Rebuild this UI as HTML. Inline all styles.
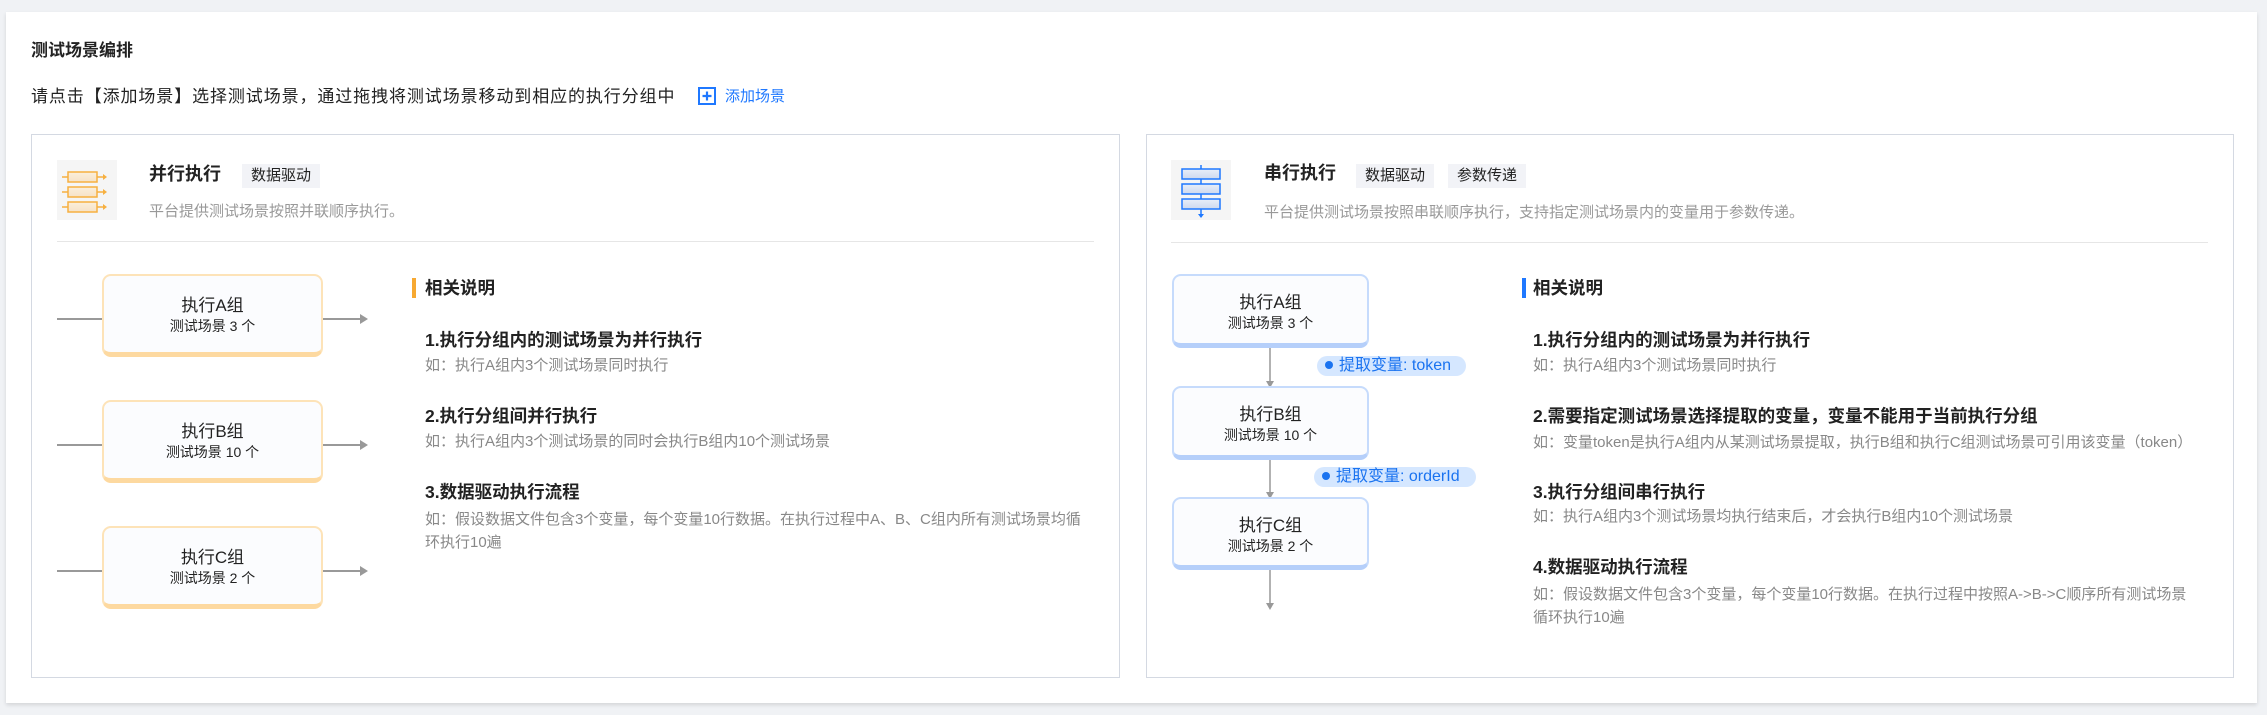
<!DOCTYPE html>
<html><head><meta charset="utf-8">
<style>
*{margin:0;padding:0;box-sizing:border-box}
body{width:2267px;height:715px;background:#f0f2f5;font-family:"Liberation Sans","Noto Sans CJK SC",sans-serif;position:relative;overflow:hidden;color:#222}
.a{position:absolute;white-space:nowrap}
.card{position:absolute;left:6px;top:12px;width:2251px;height:691px;background:#fff;box-shadow:0 2px 4px rgba(0,0,0,.12)}
.panel{position:absolute;top:134px;height:544px;border:1px solid #d4d9e2;background:#fff}
.ib{position:absolute;width:60px;height:60px;background:#f5f5f5}
.tag{position:absolute;height:24px;line-height:24px;background:#f2f3f7;font-size:15px;color:#222;padding:0 9px}
.box{position:absolute;background:#fbfcfe;border-radius:9px;text-align:center}
.box .n{font-size:17px;color:#222;margin-top:0}
.box .s{font-size:14px;color:#222}
.ob{border:2px solid #fde3b8;border-bottom:5px solid #fdd9a0}
.bb{border:2px solid #c6dbfc;border-bottom:5px solid #b5cffa}
.h{font-size:17.5px;font-weight:bold;color:#222}
.d{font-size:15px;color:#888}
.hl{position:absolute;width:4px;height:20px}
.pill{position:absolute;height:20px;line-height:20px;border-radius:10px;background:#d5e7ff;color:#1a73f0;font-size:16px;padding:0 0 0 8px}
.pill i{display:inline-block;width:8px;height:8px;border-radius:4px;background:#1a73f0;margin-right:6px;vertical-align:1px}
</style></head><body>
<div class="card"></div>
<div class="a" style="left:31px;top:40px;font-size:17px;font-weight:bold;line-height:22px">测试场景编排</div>
<div class="a" style="left:31px;top:86px;font-size:17px;letter-spacing:0.9px;line-height:22px;color:#222">请点击【添加场景】选择测试场景，通过拖拽将测试场景移动到相应的执行分组中</div>
<svg class="a" style="left:698px;top:87px" width="18" height="18" viewBox="0 0 18 18"><rect x="1" y="1" width="16" height="16" fill="none" stroke="#1f78ff" stroke-width="2"/><path d="M9 4.5v9M4.5 9h9" stroke="#1f78ff" stroke-width="2.2"/></svg>
<div class="a" style="left:725px;top:86px;font-size:15px;line-height:22px;color:#1f78ff">添加场景</div>

<!-- left panel -->
<div class="panel" style="left:31px;width:1089px"></div>
<div class="ib" style="left:57px;top:160px"></div>
<svg class="a" style="left:57px;top:160px" width="60" height="60" viewBox="0 0 60 60">
<defs><linearGradient id="og" x1="0" y1="0" x2="0" y2="1"><stop offset="0" stop-color="#fbefdc"/><stop offset="1" stop-color="#f6e2c6"/></linearGradient></defs>
<g stroke="#f7b040" stroke-width="1.5" fill="url(#og)">
<rect x="11" y="12" width="29" height="10"/><rect x="11" y="27" width="29" height="10"/><rect x="11" y="42" width="29" height="10"/></g>
<g stroke="#f7b040" stroke-width="1.5"><path d="M5 17h6M40 17h7M5 32h6M40 32h7M5 47h6M40 47h7"/></g>
<g fill="#f7b040"><path d="M46 14l4 3-4 3z"/><path d="M46 29l4 3-4 3z"/><path d="M46 44l4 3-4 3z"/></g></svg>
<div class="a h" style="left:149px;top:163px;font-size:18px;line-height:22px">并行执行</div>
<div class="tag" style="left:242px;top:164px">数据驱动</div>
<div class="a" style="left:149px;top:202px;font-size:15px;line-height:20px;color:#999">平台提供测试场景按照并联顺序执行。</div>
<div class="a" style="left:57px;top:241px;width:1037px;height:1px;background:#e6e6e6"></div>

<svg class="a" style="left:50px;top:260px" width="330" height="360">
<g stroke="#999" stroke-width="2"><path d="M7 59h46M273 59h40M7 185h46M273 185h40M7 311h46M273 311h40"/></g>
<g fill="#999"><path d="M310 54l8 5-8 5z"/><path d="M310 180l8 5-8 5z"/><path d="M310 306l8 5-8 5z"/></g></svg>
<div class="box ob" style="left:102px;top:274px;width:221px;height:83px"><div class="n" style="margin-top:15px">执行A组</div><div class="s">测试场景 3 个</div></div>
<div class="box ob" style="left:102px;top:400px;width:221px;height:83px"><div class="n" style="margin-top:15px">执行B组</div><div class="s">测试场景 10 个</div></div>
<div class="box ob" style="left:102px;top:526px;width:221px;height:83px"><div class="n" style="margin-top:15px">执行C组</div><div class="s">测试场景 2 个</div></div>

<div class="hl" style="left:412px;top:278px;background:#f7a932"></div>
<div class="a h" style="left:425px;top:277px;line-height:22px">相关说明</div>
<div class="a h" style="left:425px;top:329px;line-height:22px">1.执行分组内的测试场景为并行执行</div>
<div class="a d" style="left:425px;top:356px;line-height:20px">如：执行A组内3个测试场景同时执行</div>
<div class="a h" style="left:425px;top:405px;line-height:22px">2.执行分组间并行执行</div>
<div class="a d" style="left:425px;top:432px;line-height:20px">如：执行A组内3个测试场景的同时会执行B组内10个测试场景</div>
<div class="a h" style="left:425px;top:481px;line-height:22px">3.数据驱动执行流程</div>
<div class="a d" style="left:425px;top:508px;line-height:23px">如：假设数据文件包含3个变量，每个变量10行数据。在执行过程中A、B、C组内所有测试场景均循<br>环执行10遍</div>

<!-- right panel -->
<div class="panel" style="left:1146px;width:1088px"></div>
<div class="ib" style="left:1171px;top:160px"></div>
<svg class="a" style="left:1171px;top:160px" width="60" height="60" viewBox="0 0 60 60">
<defs><linearGradient id="bg2" x1="0" y1="0" x2="0" y2="1"><stop offset="0" stop-color="#e8eef9"/><stop offset="1" stop-color="#cdd9ee"/></linearGradient></defs>
<path d="M30 5v52" stroke="#1f78ff" stroke-width="1.5"/>
<g stroke="#1f78ff" stroke-width="1.5" fill="url(#bg2)"><rect x="11" y="9" width="38" height="10"/><rect x="11" y="24" width="38" height="10"/><rect x="11" y="39" width="38" height="10"/></g>
<path d="M27 54l3 4 3-4z" fill="#1f78ff"/></svg>
<div class="a h" style="left:1264px;top:162px;font-size:18px;line-height:22px">串行执行</div>
<div class="tag" style="left:1356px;top:164px">数据驱动</div>
<div class="tag" style="left:1448px;top:164px">参数传递</div>
<div class="a" style="left:1264px;top:203px;font-size:15px;line-height:20px;color:#999">平台提供测试场景按照串联顺序执行，支持指定测试场景内的变量用于参数传递。</div>
<div class="a" style="left:1171px;top:242px;width:1037px;height:1px;background:#e6e6e6"></div>

<svg class="a" style="left:1260px;top:340px" width="20" height="275">
<g stroke="#999" stroke-width="1.5"><path d="M10 8v36M10 119v36M10 230v36"/></g>
<g fill="#999"><path d="M6 41l4 7 4-7z"/><path d="M6 152l4 7 4-7z"/><path d="M6 263l4 7 4-7z"/></g></svg>
<div class="box bb" style="left:1172px;top:274px;width:197px;height:74px"><div class="n" style="margin-top:12px">执行A组</div><div class="s">测试场景 3 个</div></div>
<div class="box bb" style="left:1172px;top:386px;width:197px;height:74px"><div class="n" style="margin-top:12px">执行B组</div><div class="s">测试场景 10 个</div></div>
<div class="box bb" style="left:1172px;top:497px;width:197px;height:73px"><div class="n" style="margin-top:12px">执行C组</div><div class="s">测试场景 2 个</div></div>
<div class="pill" style="left:1317px;top:356px;width:149px"><i></i>提取变量: token</div>
<div class="pill" style="left:1314px;top:467px;width:162px"><i></i>提取变量: orderId</div>

<div class="hl" style="left:1522px;top:278px;background:#1f78ff"></div>
<div class="a h" style="left:1533px;top:277px;line-height:22px">相关说明</div>
<div class="a h" style="left:1533px;top:329px;line-height:22px">1.执行分组内的测试场景为并行执行</div>
<div class="a d" style="left:1533px;top:356px;line-height:20px">如：执行A组内3个测试场景同时执行</div>
<div class="a h" style="left:1533px;top:405px;line-height:22px">2.需要指定测试场景选择提取的变量，变量不能用于当前执行分组</div>
<div class="a d" style="left:1533px;top:433px;line-height:20px">如：变量token是执行A组内从某测试场景提取，执行B组和执行C组测试场景可引用该变量（token）</div>
<div class="a h" style="left:1533px;top:481px;line-height:22px">3.执行分组间串行执行</div>
<div class="a d" style="left:1533px;top:507px;line-height:20px">如：执行A组内3个测试场景均执行结束后，才会执行B组内10个测试场景</div>
<div class="a h" style="left:1533px;top:556px;line-height:22px">4.数据驱动执行流程</div>
<div class="a d" style="left:1533px;top:583px;line-height:23px">如：假设数据文件包含3个变量，每个变量10行数据。在执行过程中按照A-&gt;B-&gt;C顺序所有测试场景<br>循环执行10遍</div>
</body></html>
